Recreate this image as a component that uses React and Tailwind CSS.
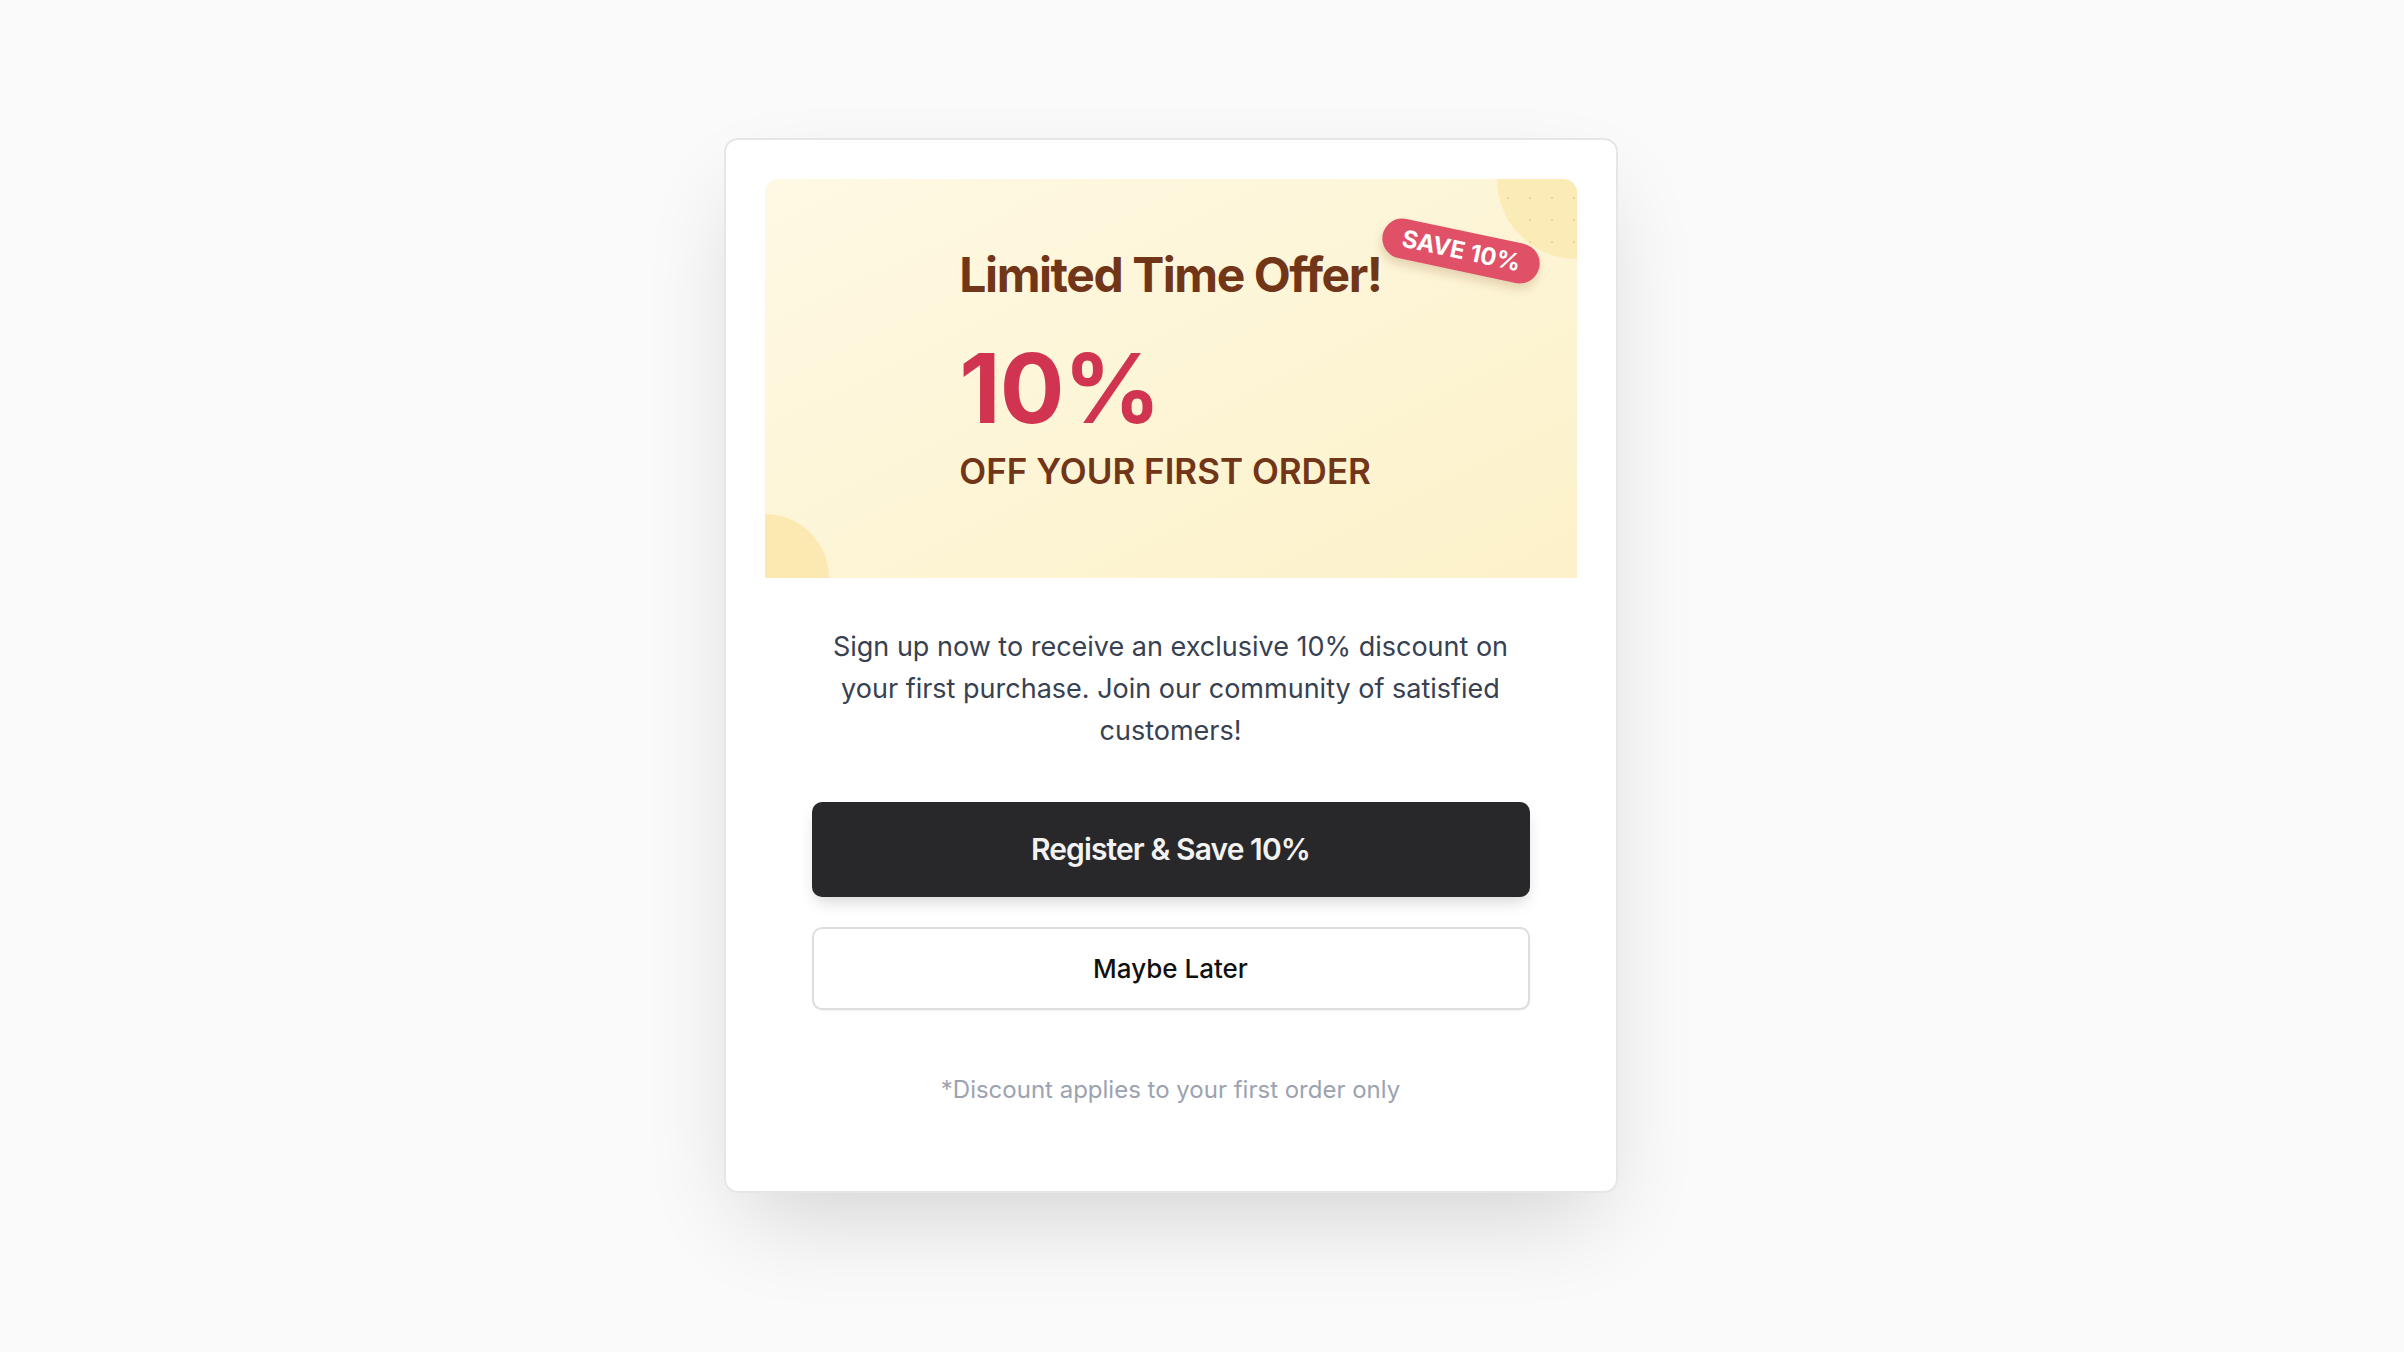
import React from 'react';

const App = () => {
  return (
    <div className="min-h-screen bg-[#fafafa] flex justify-center items-start pt-[138px] pr-[63px] font-['Inter',sans-serif]">
      <div className="w-[894px] bg-white border-2 border-[#e6e6e6] rounded-[14px] px-[39px] pt-[39px] pb-[85px] shadow-[0_40px_90px_-20px_rgba(0,0,0,0.16)]">
        {/* Offer banner */}
        <div className="relative h-[399px] overflow-hidden rounded-t-[14px] bg-gradient-to-br from-[#fef9e4] to-[#fcf1c9] flex justify-center">
          <div className="absolute -top-[80px] -right-[80px] w-[160px] h-[160px] rounded-full bg-[#fbebb6] bg-[radial-gradient(circle,rgba(200,160,90,0.3)_1px,transparent_1.5px)] bg-[length:22px_22px]" />
          <div className="absolute -bottom-[64px] -left-[64px] w-[128px] h-[128px] rounded-full bg-[#fce9b2]" />

          <div className="absolute top-[52px] right-[35px] rotate-12 h-[40px] px-[20px] rounded-full bg-[#e05066] text-white text-[24px] font-bold leading-[40px] shadow-[0_6px_10px_rgba(120,60,20,0.18)]">
            SAVE 10%
          </div>

          <div className="relative w-fit flex flex-col items-start pt-[64px]">
            <h2 className="text-[48px] leading-[64px] font-bold tracking-[-0.03em] text-[#713518]">
              Limited Time Offer!
            </h2>
            <div className="mt-[33px] text-[96px] leading-[96px] font-bold tracking-[-0.01em] text-[#d03450]">
              10%
            </div>
            <div className="mt-[11px] text-[35px] leading-[48px] font-semibold text-[#713518]">
              OFF YOUR FIRST ORDER
            </div>
          </div>
        </div>

        {/* Body */}
        <div className="px-[47px] flex flex-col items-center">
          <p className="mt-[48px] w-full text-center text-[27px] leading-[42px] text-[#374151]">
            Sign up now to receive an exclusive 10% discount on your first purchase. Join our community of satisfied customers!
          </p>

          <button className="mt-[50px] w-full h-[95px] rounded-[10px] bg-[#28282a] text-[#f2f2f2] text-[30px] font-semibold tracking-[-0.03em] shadow-[0_8px_16px_-4px_rgba(0,0,0,0.18)]">
            Register &amp; Save 10%
          </button>

          <button className="mt-[30px] w-full h-[83px] rounded-[10px] border-2 border-[#dedede] bg-white text-[#111111] text-[26px] font-medium shadow-[0_1px_2px_rgba(0,0,0,0.05)]">
            Maybe Later
          </button>

          <p className="mt-[64px] text-[24px] leading-[32px] text-[#9ca3af]">
            *Discount applies to your first order only
          </p>
        </div>
      </div>
    </div>
  );
};

export default App;
